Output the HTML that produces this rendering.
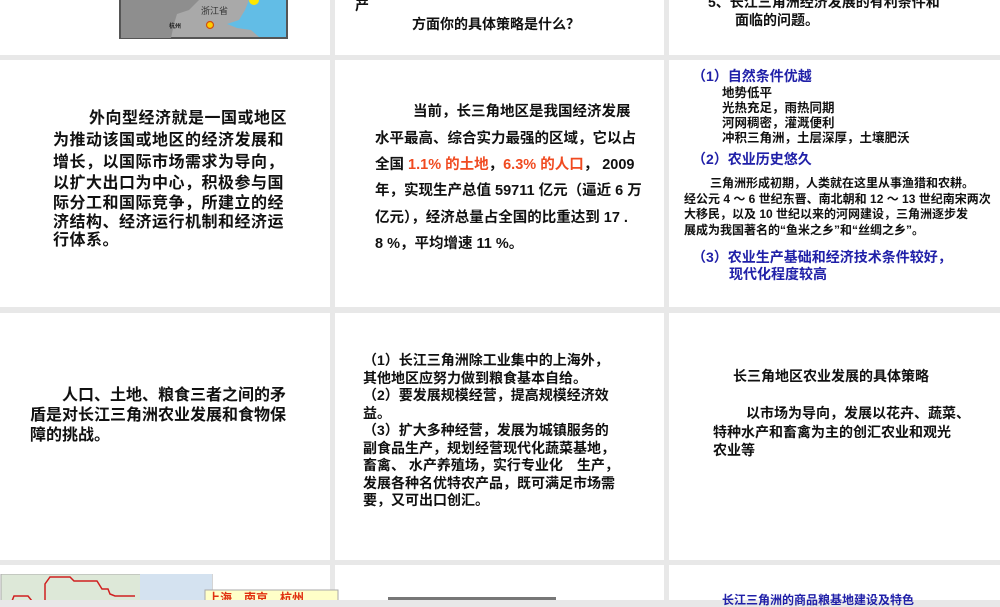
<!DOCTYPE html>
<html><head><meta charset="utf-8"><style>
body{margin:0;width:1000px;height:600px;overflow:hidden;background:#e8e8e8;position:relative;font-family:"Liberation Sans","Noto Sans CJK SC",sans-serif;font-weight:bold;color:#111}
.c{position:absolute;background:#fff}
.t{position:absolute;white-space:nowrap;line-height:1}
.b{color:#2020a8}
.r{color:#f04a20}
</style></head><body>
<div class="c" style="left:0;top:0;width:330px;height:55px"></div>
<div class="c" style="left:335px;top:0;width:329px;height:55px"></div>
<div class="c" style="left:669px;top:0;width:331px;height:55px"></div>
<div class="c" style="left:0;top:60px;width:330px;height:247px"></div>
<div class="c" style="left:335px;top:60px;width:329px;height:247px"></div>
<div class="c" style="left:669px;top:60px;width:331px;height:247px"></div>
<div class="c" style="left:0;top:313px;width:330px;height:247px"></div>
<div class="c" style="left:335px;top:313px;width:329px;height:247px"></div>
<div class="c" style="left:669px;top:313px;width:331px;height:247px"></div>
<div class="c" style="left:0;top:565px;width:330px;height:35px"></div>
<div class="c" style="left:335px;top:565px;width:329px;height:35px"></div>
<div class="c" style="left:669px;top:565px;width:331px;height:35px"></div>

<svg style="position:absolute;left:119px;top:0" width="169" height="40">
<rect x="1" y="-2" width="167" height="40" fill="#a9a9a9" stroke="#555" stroke-width="2"/>
<path d="M2 0 H80 L70 10 L58 14 L55 24 L52 38 H2Z" fill="#8e8e8e"/>
<path d="M130 0 H167 V37 H140 L132 30 L118 28 L108 24 L120 20 L126 10Z" fill="#62bde6"/>
<circle cx="135" cy="0" r="5" fill="#ffe600"/>
<text x="82" y="14" font-size="9" font-weight="normal" fill="#333" font-family="Noto Sans CJK SC">浙江省</text>
<text x="50" y="28" font-size="6" fill="#222" font-family="Noto Sans CJK SC">杭州</text>
<circle cx="91" cy="25" r="3.5" fill="#ffcc00" stroke="#d05010" stroke-width="1.2"/>
</svg>

<div class="t" style="left:355px;top:-2px;font-size:14px">产</div>
<div class="t" style="left:412px;top:17px;font-size:14px">方面你的具体策略是什么？</div>
<div class="t" style="left:708px;top:-5px;font-size:14px">5、长江三角洲经济发展的有利条件和</div>
<div class="t" style="left:735px;top:13px;font-size:14px">面临的问题。</div>

<div class="t" style="left:89px;top:111px;font-size:16px;letter-spacing:0.5px">外向型经济就是一国或地区</div>
<div class="t" style="left:53px;top:133px;font-size:16px;letter-spacing:0.5px">为推动该国或地区的经济发展和</div>
<div class="t" style="left:53px;top:155px;font-size:16px;letter-spacing:0.5px">增长，以国际市场需求为导向，</div>
<div class="t" style="left:53px;top:176px;font-size:16px;letter-spacing:0.5px">以扩大出口为中心，积极参与国</div>
<div class="t" style="left:53px;top:196px;font-size:16px;letter-spacing:0.5px">际分工和国际竞争，所建立的经</div>
<div class="t" style="left:53px;top:215px;font-size:16px;letter-spacing:0.5px">济结构、经济运行机制和经济运</div>
<div class="t" style="left:53px;top:233px;font-size:16px;letter-spacing:0.5px">行体系。</div>

<div class="t" style="left:413px;top:105px;font-size:14.5px">当前，长三角地区是我国经济发展</div>
<div class="t" style="left:375px;top:132px;font-size:14.5px">水平最高、综合实力最强的区域，它以占</div>
<div class="t" style="left:375px;top:158px;font-size:14.5px">全国 <span class="r">1.1% 的土地</span>，<span class="r">6.3% 的人口</span>， 2009</div>
<div class="t" style="left:375px;top:184px;font-size:14.5px">年，实现生产总值 59711 亿元（逼近 6 万</div>
<div class="t" style="left:375px;top:211px;font-size:14.5px">亿元），经济总量占全国的比重达到 17 .</div>
<div class="t" style="left:375px;top:237px;font-size:14.5px">8 %，平均增速 11 %。</div>

<div class="t b" style="left:692px;top:69px;font-size:14px">（1）自然条件优越</div>
<div class="t" style="left:722px;top:87px;font-size:12.5px">地势低平</div>
<div class="t" style="left:722px;top:102px;font-size:12.5px">光热充足，雨热同期</div>
<div class="t" style="left:722px;top:117px;font-size:12.5px">河网稠密，灌溉便利</div>
<div class="t" style="left:722px;top:132px;font-size:12.5px">冲积三角洲，土层深厚，土壤肥沃</div>
<div class="t b" style="left:692px;top:152px;font-size:14px">（2）农业历史悠久</div>
<div class="t" style="left:710px;top:177px;font-size:12px">三角洲形成初期，人类就在这里从事渔猎和农耕。</div>
<div class="t" style="left:684px;top:193px;font-size:12px">经公元 4 ～ 6 世纪东晋、南北朝和 12 ～ 13 世纪南宋两次</div>
<div class="t" style="left:684px;top:208px;font-size:12px">大移民，以及 10 世纪以来的河网建设，三角洲逐步发</div>
<div class="t" style="left:684px;top:224px;font-size:12px">展成为我国著名的“鱼米之乡”和“丝绸之乡”。</div>
<div class="t b" style="left:692px;top:250px;font-size:14px">（3）农业生产基础和经济技术条件较好，</div>
<div class="t b" style="left:729px;top:267px;font-size:14px">现代化程度较高</div>

<div class="t" style="left:62px;top:388px;font-size:16px">人口、土地、粮食三者之间的矛</div>
<div class="t" style="left:30px;top:408px;font-size:16px">盾是对长江三角洲农业发展和食物保</div>
<div class="t" style="left:30px;top:428px;font-size:16px">障的挑战。</div>

<div class="t" style="left:363px;top:353px;font-size:14px">（1）长江三角洲除工业集中的上海外，</div>
<div class="t" style="left:363px;top:371px;font-size:14px">其他地区应努力做到粮食基本自给。</div>
<div class="t" style="left:363px;top:388px;font-size:14px">（2）要发展规模经营，提高规模经济效</div>
<div class="t" style="left:363px;top:406px;font-size:14px">益。</div>
<div class="t" style="left:363px;top:423px;font-size:14px">（3）扩大多种经营，发展为城镇服务的</div>
<div class="t" style="left:363px;top:441px;font-size:14px">副食品生产，规划经营现代化蔬菜基地，</div>
<div class="t" style="left:363px;top:458px;font-size:14px">畜禽、 水产养殖场，实行专业化　生产，</div>
<div class="t" style="left:363px;top:476px;font-size:14px">发展各种名优特农产品，既可满足市场需</div>
<div class="t" style="left:363px;top:493px;font-size:14px">要，又可出口创汇。</div>

<div class="t" style="left:733px;top:369px;font-size:14px">长三角地区农业发展的具体策略</div>
<div class="t" style="left:746px;top:406px;font-size:14px">以市场为导向，发展以花卉、蔬菜、</div>
<div class="t" style="left:713px;top:425px;font-size:14px">特种水产和畜禽为主的创汇农业和观光</div>
<div class="t" style="left:713px;top:443px;font-size:14px">农业等</div>

<svg style="position:absolute;left:0;top:574px" width="340" height="26">
<rect x="1" y="0" width="211" height="27" fill="#dde8d8" stroke="#aaa"/>
<rect x="140" y="0" width="72" height="27" fill="#d4e2f0"/>
<path d="M45 28 V10 L50 3 H70 L74 7 H97 L102 15 H108 L110 20 L115 22 H135" fill="none" stroke="#d02020" stroke-width="1.5"/>
<path d="M12 27 L14 22 H28 L32 27" fill="none" stroke="#d02020" stroke-width="1.5"/>
<rect x="205" y="16" width="133" height="12" fill="#ffffc8" stroke="#aaa"/>
<text x="208" y="28" font-size="12" fill="#e03010" font-weight="bold" font-family="Noto Sans CJK SC">上海　南京　杭州</text>
</svg>
<div style="position:absolute;left:388px;top:597px;width:168px;height:3px;background:#777"></div>
<div class="t b" style="left:722px;top:594px;font-size:12px">长江三角洲的商品粮基地建设及特色</div>
</body></html>
